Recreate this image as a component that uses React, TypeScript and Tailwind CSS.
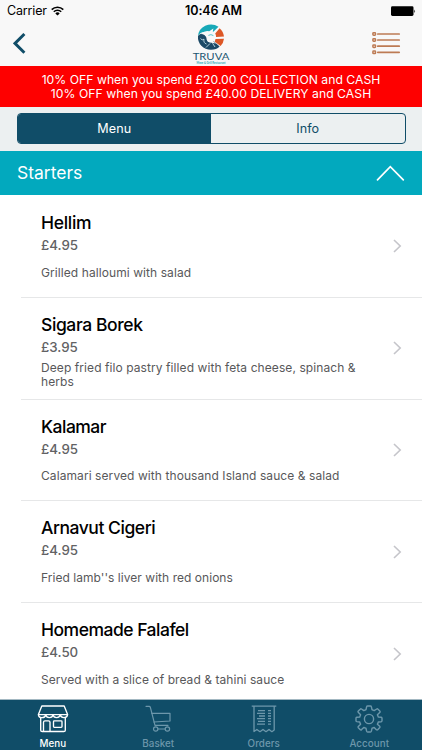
import React from 'react';

type Dish = { name: string; price: string; text: string; nameGap: string; textGap: string };

const dishes: Dish[] = [
  { name: 'Hellim', price: '£4.95', text: 'Grilled halloumi with salad', nameGap: 'tracking-[-0.3px]', textGap: 'tracking-[0.08px]' },
  { name: 'Sigara Borek', price: '£3.95', text: 'Deep fried filo pastry filled with feta cheese, spinach & herbs', nameGap: 'tracking-[-0.4px]', textGap: 'tracking-[0.08px]' },
  { name: 'Kalamar', price: '£4.95', text: 'Calamari served with thousand Island sauce & salad', nameGap: 'tracking-[-0.5px]', textGap: 'tracking-[0.08px]' },
  { name: 'Arnavut Cigeri', price: '£4.95', text: "Fried lamb''s liver with red onions", nameGap: 'tracking-[-0.46px]', textGap: 'tracking-[0.04px]' },
  { name: 'Homemade Falafel', price: '£4.50', text: 'Served with a slice of bread & tahini sauce', nameGap: 'tracking-[-0.5px]', textGap: 'tracking-[0.06px]' },
];

function StatusBar() {
  return (
    <div className="grid h-[22px] grid-cols-3 items-center px-[7px] text-[12.5px] leading-none text-black">
      <div className="flex items-center gap-[5px]">
        <span className="tracking-[-0.15px]">Carrier</span>
        <svg className="-ml-[1px]" width="13" height="10" viewBox="0 0 13 10" fill="none" stroke="#000" strokeWidth="1.6">
          <path d="M0.7 3.6A8.2 8.2 0 0 1 12.3 3.6" />
          <path d="M2.8 5.8A5.2 5.2 0 0 1 10.2 5.8" />
          <path d="M6.5 9.6L4.3 7.4A3.1 3.1 0 0 1 8.7 7.4Z" fill="#000" stroke="none" />
        </svg>
      </div>
      <div className="whitespace-nowrap pl-[5px] text-center font-semibold tracking-[-0.1px]">10:46 AM</div>
      <svg className="-mr-[1px] justify-self-end" width="25" height="11" viewBox="0 0 25 11">
        <rect x="0" y="0.3" width="22.5" height="9.7" rx="1.4" />
        <path d="M23.3 3.6Q25 5.4 23.3 7.2Z" />
      </svg>
    </div>
  );
}

function Logo() {
  return (
    <svg width="42" height="42" viewBox="190 24 42 42" className="overflow-visible">
      <path d="M211 34L218.5 26.8A13 12.4 0 0 0 198 36.5Q200 31.5 205 32Q208 31 211 34Z" fill="#18a9b8" />
      <path d="M198 36A13 12.6 0 0 0 211 49.8Q216.5 49.8 219.6 46.6L214 41.5L208 42L206 36Q201.5 31.5 198 36Z" fill="#1c4966" />
      <path d="M215 33.8L219.6 28.2Q223.4 31.4 224 36.6L216 37Z" fill="#dd5726" />
      <path d="M215.4 39L224 38.8Q223.5 43 220.6 46L214.8 41.8Z" fill="#dd5726" />
      <path d="M201 34.2Q205 30 209.2 31.2L213.4 28.4L212.8 31.6Q216 33 216 37.2L215.6 39.2L212 38Q211.5 41.2 216.2 43.4L209.6 42.6Q206 41 206.6 37.4Q204 33.6 201 34.2Z" fill="#f8f8f8" />
      <path d="M200.6 38.4Q202 41.2 204 39.2Q203.2 43 206.5 44M210 43.5L206 47.5M212.5 43.2L215 47" fill="none" stroke="#c2dce6" strokeWidth="0.9" />
      <path d="M208.4 35.4Q211 33.8 213.4 35.6" fill="none" stroke="#18a9b8" strokeWidth="0.7" />
      <text x="192.7" y="59.8" textLength="36.6" lengthAdjust="spacingAndGlyphs" fontFamily="Lato, sans-serif" fontSize="9.6" fill="#1c5672">TRUVA</text>
      <text x="196.6" y="63.8" textLength="29" lengthAdjust="spacingAndGlyphs" fontFamily="Lato, sans-serif" fontWeight="700" fontSize="3.5" fill="#28a7b6">Meze &amp; Grill Restaurant</text>
    </svg>
  );
}

function NavBar() {
  return (
    <div className="flex h-[43px] items-center justify-between pl-[13px] pr-[21px]">
      <svg width="13" height="22" viewBox="0 0 13 22" fill="none" stroke="#104d68" strokeWidth="2.9">
        <path d="M11.4 1L2 10.4L11.4 19.8" />
      </svg>
      <div className="pl-[23px] pt-[2px]"><Logo /></div>
      <svg className="-mt-[2px]" width="29" height="24" viewBox="0 0 29 24" fill="none" stroke="#bd7b54">
        {[3, 9, 15.2, 21.3].map((y) => (
          <g key={y}>
            <rect x="0.9" y={y - 1.3} width="2.6" height="2.6" rx="0.7" strokeWidth="1.5" />
            <path d={`M5.8 ${y}H27.2`} strokeWidth="1.7" strokeLinecap="round" />
          </g>
        ))}
      </svg>
    </div>
  );
}

function DishRow({ dish, last }: { dish: Dish; last: boolean }) {
  return (
    <li className={`ml-[21px] flex h-[101.8px] items-center pl-5 pr-[20px] ${last ? '' : 'border-b border-[#e6e7e8]'}`}>
      <div className="h-full w-[330px] pt-[15px]">
        <h3 className={`h-[24px] text-[17.5px] font-medium leading-[24px] text-black ${dish.nameGap}`}>{dish.name}</h3>
        <p className="h-[21px] text-[13.3px] font-medium leading-[20.4px] tracking-[0px] text-[#626264]">{dish.price}</p>
        <div className="flex h-[34px] items-center">
          <p className={`text-[12px] leading-[14.2px] text-[#58585a] ${dish.textGap}`}>{dish.text}</p>
        </div>
      </div>
      <svg className="ml-auto" width="9" height="14" viewBox="0 0 9 14" fill="none" stroke="#c5c5ca" strokeWidth="1.6">
        <path d="M1 1L7.2 7L1 13" />
      </svg>
    </li>
  );
}

function ShopIcon() {
  return (
    <svg width="32" height="28" viewBox="0 0 32 28" fill="none" stroke="currentColor" strokeWidth="1.35" strokeLinejoin="round">
      <path d="M4.8 1H27.2L30.6 9.6H1.4Z" />
      <path d="M1.4 9.6Q1.6 12.6 5 12.6T8.7 9.6Q9.2 12.6 12.4 12.6T16 9.6Q16.6 12.6 19.6 12.6T23.3 9.6Q23.8 12.6 27 12.6T30.6 9.6" />
      <path d="M3.7 12.6V25.3Q3.7 26.5 5.2 26.5H26.8Q28.3 26.5 28.3 25.3V12.6M6.5 26.3V17.3Q6.5 15.9 8 15.9H11.5Q13 15.9 13 17.3V26.3" />
      <rect x="16.5" y="15.9" width="8.5" height="6.4" rx="0.8" />
    </svg>
  );
}

function CartIcon() {
  return (
    <svg width="27" height="28" viewBox="0 0 27 28" fill="none" stroke="currentColor" strokeWidth="1.2" strokeLinecap="round" strokeLinejoin="round">
      <path d="M1 1.3H4.2Q5 1.3 5.3 2.2L10 20.3H23" />
      <path d="M6.8 8.3H25V16L9 17" />
      <circle cx="10.7" cy="24" r="2.2" />
      <circle cx="22.4" cy="24" r="2.2" />
      <path d="M12.9 24H20.2" />
    </svg>
  );
}

function ReceiptIcon() {
  return (
    <svg width="26" height="28" viewBox="0 0 26 28" fill="none" stroke="currentColor" strokeWidth="1.3" strokeLinejoin="round">
      <path d="M0.7 1.2H25.3M3 1.2V26.5L5.9 24.5L9 26.7L12 24.5L15 26.7L18 24.5L20.9 26.7L23.2 25V1.2" />
      <path d="M7 5.6H14M6 8.3H14M8 11H14M6 13.7H14M7 16.4H14M6 19.1H14" />
      <path d="M17 5.6H20M17 8.3H20M17 11H20M17 13.7H20M17 16.4H20M17 19.1H20" />
    </svg>
  );
}

function GearIcon() {
  return (
    <svg width="28" height="28" viewBox="0 0 28 28" fill="none" stroke="currentColor" strokeWidth="1.4" strokeLinejoin="round">
      <circle cx="14" cy="14" r="4.6" />
      <path d="M11.6 1.8Q11.8 1 12.6 1H15.4Q16.2 1 16.4 1.8L17 4.7Q18.2 5 19.2 5.6L21.7 4Q22.4 3.6 23 4.2L24.8 6Q25.4 6.6 25 7.3L22.4 9.8Q23 10.8 23.3 12L26.2 12.3Q27 12.4 27 13.2V15.8Q27 16.5 26.2 16.7L23.3 17Q23 18.2 22.4 19.2L24.7 21.3Q25.3 22 24.8 22.6L22.7 24.7Q22.1 25.2 21.4 24.7L19.2 22.4Q18.2 23 17 23.3L16.4 26.2Q16.2 27 15.4 27H12.6Q11.8 27 11.6 26.2L11 23.3Q9.8 23 8.8 22.4L6.6 24.6Q5.9 25.2 5.3 24.7L3.3 22.7Q2.8 22.1 3.3 21.4L5.6 19.2Q5 18.2 4.7 17L1.8 16.6Q1 16.4 1 15.7V13Q1 12.3 1.8 12.2L4.7 12Q5 10.8 5.6 9.8L3.2 7.3Q2.7 6.6 3.3 6L5.2 4.2Q5.8 3.6 6.5 4L8.8 5.6Q9.8 5 11 4.7Z" />
    </svg>
  );
}

const tabs = [
  { label: 'Menu', Icon: ShopIcon, active: true },
  { label: 'Basket', Icon: CartIcon, active: false },
  { label: 'Orders', Icon: ReceiptIcon, active: false },
  { label: 'Account', Icon: GearIcon, active: false },
];

export default function App() {
  return (
    <div className="flex h-[750px] w-[422px] flex-col overflow-hidden bg-white font-['Inter',sans-serif]">
      <header className="h-[65.5px] shrink-0 bg-[#f8f8f8]">
        <StatusBar />
        <NavBar />
      </header>
      <div className="flex h-[41px] shrink-0 flex-col items-center bg-[#fe0000] pt-[7px] text-[12.2px] leading-[14.3px] text-white">
        <p className="whitespace-nowrap tracking-[0.01px]">10% OFF when you spend £20.00 COLLECTION and CASH</p>
        <p className="whitespace-nowrap tracking-[0.04px]">10% OFF when you spend £40.00 DELIVERY and CASH</p>
      </div>
      <div className="h-[44.5px] shrink-0 bg-[#ecf0f1] px-[16.5px] pt-[6.5px]">
        <div className="grid h-[31px] grid-cols-2 overflow-hidden rounded-[4px] border border-[#104d68] text-center text-[12.6px] leading-[30px] tracking-[0.1px]">
          <div className="bg-[#104d68] text-white">Menu</div>
          <div className="text-[#104d68]">Info</div>
        </div>
      </div>
      <div className="flex h-[44px] shrink-0 items-center justify-between bg-[#02a9be] pl-[17px] pr-[17px]">
        <h2 className="text-[17.5px] leading-[22px] text-white">Starters</h2>
        <svg width="29" height="16" viewBox="0 0 29 16" fill="none" stroke="#fff" strokeWidth="1.7" strokeLinecap="round">
          <path d="M1.5 14.8L14.3 1.6L27.3 14.8" />
        </svg>
      </div>
      <ul className="min-h-0 flex-1 overflow-hidden pt-[1px]">
        {dishes.map((dish, i) => (
          <DishRow key={dish.name} dish={dish} last={i === dishes.length - 1} />
        ))}
      </ul>
      <nav className="grid h-[51px] shrink-0 grid-cols-4 border-t border-[#a3b8c2] bg-[#104d68]">
        {tabs.map(({ label, Icon, active }) => (
          <div key={label} className={`flex flex-col items-center pt-[5px] ${active ? 'text-white' : 'text-[#6d97ab]'}`}>
            <Icon />
            <span className="mt-[3.5px] text-[9.8px] font-medium leading-[13px] tracking-[0.05px]">{label}</span>
          </div>
        ))}
      </nav>
    </div>
  );
}
